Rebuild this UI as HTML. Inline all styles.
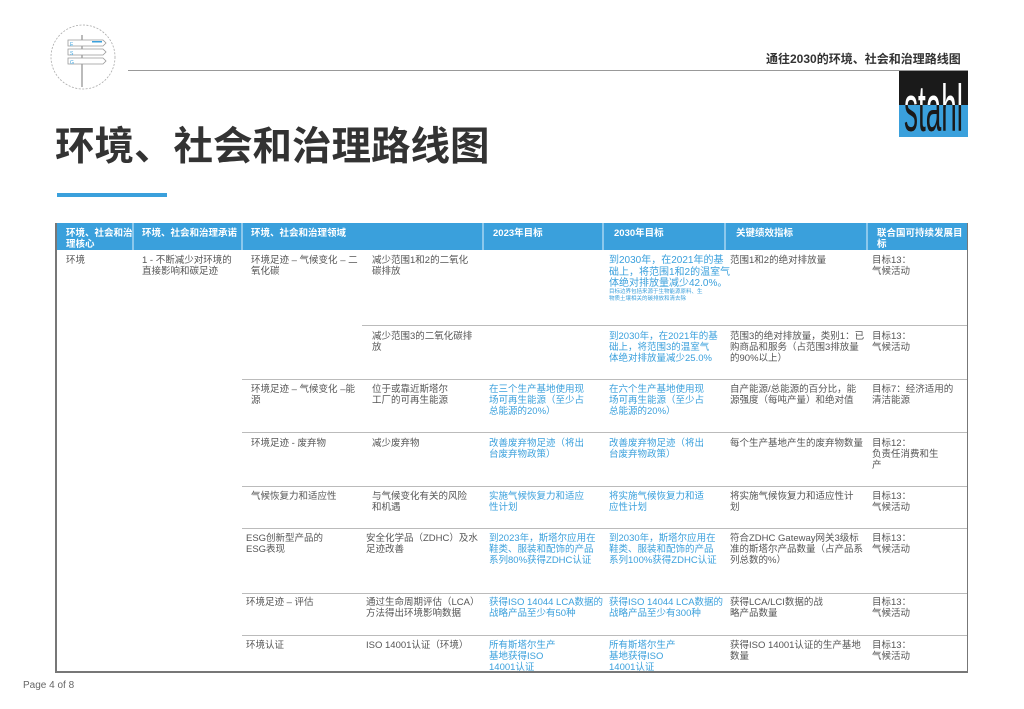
<!DOCTYPE html>
<html><head><meta charset="utf-8"><style>
*{margin:0;padding:0;box-sizing:border-box}
body{width:1024px;height:709px;background:#fff;position:relative;overflow:hidden;font-family:"Liberation Sans","Noto Sans CJK SC",sans-serif}
.a{position:absolute}
.t{position:absolute;font-size:9.5px;line-height:11px;color:#555}
.b{color:#3aa0dc}
.h{position:absolute;font-size:9.5px;line-height:11px;color:#fff;font-weight:bold}
.hl{position:absolute;height:1px;background:#bbb;left:242px;width:725px}
.vs{position:absolute;top:223px;height:27px;width:2px;background:#8cc8ec}
</style></head><body>
<svg class="a" style="left:48px;top:22px" width="72" height="72" viewBox="0 0 72 72">
<circle cx="35" cy="35" r="32" fill="none" stroke="#aaa" stroke-width="0.8" stroke-dasharray="2 1.5"/>
<rect x="33" y="13" width="2" height="52" fill="#bbb"/>
<path d="M20 18h35l3 3-3 3H20z" fill="#fff" stroke="#999" stroke-width="0.8"/>
<path d="M20 27h35l3 3-3 3H20z" fill="#fff" stroke="#999" stroke-width="0.8"/>
<path d="M20 36h35l3 3-3 3H20z" fill="#fff" stroke="#999" stroke-width="0.8"/>
<rect x="44" y="19" width="10" height="1.5" fill="#3aa0dc"/>
<text x="22" y="24" font-size="5" fill="#3aa0dc">E</text><text x="22" y="33" font-size="5" fill="#3aa0dc">S</text><text x="22" y="42" font-size="5" fill="#3aa0dc">G</text>
</svg>
<div class="a" style="left:128px;top:70px;width:840px;height:1px;background:#999"></div>
<div class="a" style="left:766px;top:50px;font-size:12px;font-weight:bold;color:#333">通往2030的环境、社会和治理路线图</div>
<svg class="a" style="left:899px;top:71px" width="69" height="66" viewBox="0 0 69 66">
<defs><clipPath id="top"><rect x="0" y="0" width="69" height="34"/></clipPath><clipPath id="bot"><rect x="0" y="34" width="69" height="32"/></clipPath></defs>
<rect width="69" height="66" fill="#1a1a1a"/>
<rect y="34" width="69" height="32" fill="#3aa0dc"/>
<g transform="translate(5,60) scale(1,2.2)"><text x="0" y="0" font-size="30" textLength="59" lengthAdjust="spacingAndGlyphs" fill="#fff" clip-path="url(#top)" font-family="Liberation Sans Narrow, Liberation Sans, sans-serif">stahl</text></g>
<g clip-path="url(#bot)"><g transform="translate(5,60) scale(1,2.2)"><text x="0" y="0" font-size="30" textLength="59" lengthAdjust="spacingAndGlyphs" fill="#1a1a1a" font-family="Liberation Sans Narrow, Liberation Sans, sans-serif">stahl</text></g></g>
<g clip-path="url(#top)"><g transform="translate(5,60) scale(1,2.2)"><text x="0" y="0" font-size="30" textLength="59" lengthAdjust="spacingAndGlyphs" fill="#fff" font-family="Liberation Sans Narrow, Liberation Sans, sans-serif">stahl</text></g></g>
</svg>
<div class="a" style="left:55px;top:123px;font-size:39.5px;line-height:48px;font-weight:bold;color:#333">环境、社会和治理路线图</div>
<div class="a" style="left:57px;top:193px;width:110px;height:4px;background:#3aa0dc"></div>

<div class="a" style="left:55px;top:223px;width:913px;height:27px;background:#3aa0dc"></div>
<div class="vs" style="left:132px"></div><div class="vs" style="left:241px"></div><div class="vs" style="left:482px"></div><div class="vs" style="left:602px"></div><div class="vs" style="left:724px"></div><div class="vs" style="left:866px"></div>
<div class="h" style="left:66px;top:228px">环境、社会和治<br>理核心</div>
<div class="h" style="left:142px;top:228px">环境、社会和治理承诺</div>
<div class="h" style="left:251px;top:228px">环境、社会和治理领域</div>
<div class="h" style="left:493px;top:228px">2023年目标</div>
<div class="h" style="left:614px;top:228px">2030年目标</div>
<div class="h" style="left:736px;top:228px">关键绩效指标</div>
<div class="h" style="left:877px;top:228px">联合国可持续发展目<br>标</div>

<div class="a" style="left:55px;top:223px;width:2px;height:450px;background:#777"></div>
<div class="a" style="left:967px;top:223px;width:1px;height:450px;background:#777"></div>
<div class="a" style="left:55px;top:671px;width:913px;height:2px;background:#777"></div>
<div class="hl" style="left:362px;width:605px;top:325px"></div>
<div class="hl" style="top:379px"></div><div class="hl" style="top:432px"></div><div class="hl" style="top:486px"></div><div class="hl" style="top:528px"></div><div class="hl" style="top:593px"></div><div class="hl" style="top:635px"></div>

<div class="t" style="left:66px;top:255px">环境</div>
<div class="t" style="left:142px;top:255px">1 - 不断减少对环境的<br>直接影响和碳足迹</div>
<div class="t" style="left:251px;top:255px">环境足迹 – 气候变化 – 二<br>氧化碳</div>
<div class="t" style="left:372px;top:255px">减少范围1和2的二氧化<br>碳排放</div>
<div class="t b" style="left:609px;top:255px;font-size:10px;line-height:11.5px">到2030年，在2021年的基<br>础上，将范围1和2的温室气<br>体绝对排放量减少42.0%。</div>
<div class="t b" style="left:609px;top:289px;font-size:5.5px;line-height:7px">目标边界包括来源于生物能源原料、生<br>物质土壤相关的碳排放和清去除</div>
<div class="t" style="left:730px;top:255px">范围1和2的绝对排放量</div>
<div class="t" style="left:872px;top:255px">目标13：<br>气候活动</div>

<div class="t" style="left:372px;top:331px">减少范围3的二氧化碳排<br>放</div>
<div class="t b" style="left:609px;top:331px">到2030年，在2021年的基<br>础上，将范围3的温室气<br>体绝对排放量减少25.0%</div>
<div class="t" style="left:730px;top:331px">范围3的绝对排放量，类别1：已<br>购商品和服务（占范围3排放量<br>的90%以上）</div>
<div class="t" style="left:872px;top:331px">目标13：<br>气候活动</div>

<div class="t" style="left:251px;top:384px">环境足迹 – 气候变化 –能<br>源</div>
<div class="t" style="left:372px;top:384px">位于或靠近斯塔尔<br>工厂的可再生能源</div>
<div class="t b" style="left:489px;top:384px">在三个生产基地使用现<br>场可再生能源（至少占<br>总能源的20%）</div>
<div class="t b" style="left:609px;top:384px">在六个生产基地使用现<br>场可再生能源（至少占<br>总能源的20%）</div>
<div class="t" style="left:730px;top:384px">自产能源/总能源的百分比，能<br>源强度（每吨产量）和绝对值</div>
<div class="t" style="left:872px;top:384px">目标7：经济适用的<br>清洁能源</div>

<div class="t" style="left:251px;top:438px">环境足迹 - 废弃物</div>
<div class="t" style="left:372px;top:438px">减少废弃物</div>
<div class="t b" style="left:489px;top:438px">改善废弃物足迹（将出<br>台废弃物政策）</div>
<div class="t b" style="left:609px;top:438px">改善废弃物足迹（将出<br>台废弃物政策）</div>
<div class="t" style="left:730px;top:438px">每个生产基地产生的废弃物数量</div>
<div class="t" style="left:872px;top:438px">目标12：<br>负责任消费和生<br>产</div>

<div class="t" style="left:251px;top:491px">气候恢复力和适应性</div>
<div class="t" style="left:372px;top:491px">与气候变化有关的风险<br>和机遇</div>
<div class="t b" style="left:489px;top:491px">实施气候恢复力和适应<br>性计划</div>
<div class="t b" style="left:609px;top:491px">将实施气候恢复力和适<br>应性计划</div>
<div class="t" style="left:730px;top:491px">将实施气候恢复力和适应性计<br>划</div>
<div class="t" style="left:872px;top:491px">目标13：<br>气候活动</div>

<div class="t" style="left:246px;top:533px">ESG创新型产品的<br>ESG表现</div>
<div class="t" style="left:366px;top:533px">安全化学品（ZDHC）及水<br>足迹改善</div>
<div class="t b" style="left:489px;top:533px">到2023年，斯塔尔应用在<br>鞋类、服装和配饰的产品<br>系列80%获得ZDHC认证</div>
<div class="t b" style="left:609px;top:533px">到2030年，斯塔尔应用在<br>鞋类、服装和配饰的产品<br>系列100%获得ZDHC认证</div>
<div class="t" style="left:730px;top:533px">符合ZDHC Gateway网关3级标<br>准的斯塔尔产品数量（占产品系<br>列总数的%）</div>
<div class="t" style="left:872px;top:533px">目标13：<br>气候活动</div>

<div class="t" style="left:246px;top:597px">环境足迹 – 评估</div>
<div class="t" style="left:366px;top:597px">通过生命周期评估（LCA）<br>方法得出环境影响数据</div>
<div class="t b" style="left:489px;top:597px">获得ISO 14044 LCA数据的<br>战略产品至少有50种</div>
<div class="t b" style="left:609px;top:597px">获得ISO 14044 LCA数据的<br>战略产品至少有300种</div>
<div class="t" style="left:730px;top:597px">获得LCA/LCI数据的战<br>略产品数量</div>
<div class="t" style="left:872px;top:597px">目标13：<br>气候活动</div>

<div class="t" style="left:246px;top:640px">环境认证</div>
<div class="t" style="left:366px;top:640px">ISO 14001认证（环境）</div>
<div class="t b" style="left:489px;top:640px">所有斯塔尔生产<br>基地获得ISO<br>14001认证</div>
<div class="t b" style="left:609px;top:640px">所有斯塔尔生产<br>基地获得ISO<br>14001认证</div>
<div class="t" style="left:730px;top:640px">获得ISO 14001认证的生产基地<br>数量</div>
<div class="t" style="left:872px;top:640px">目标13：<br>气候活动</div>

<div class="a" style="left:23px;top:680px;font-size:10px;color:#666">Page 4 of 8</div>
</body></html>
